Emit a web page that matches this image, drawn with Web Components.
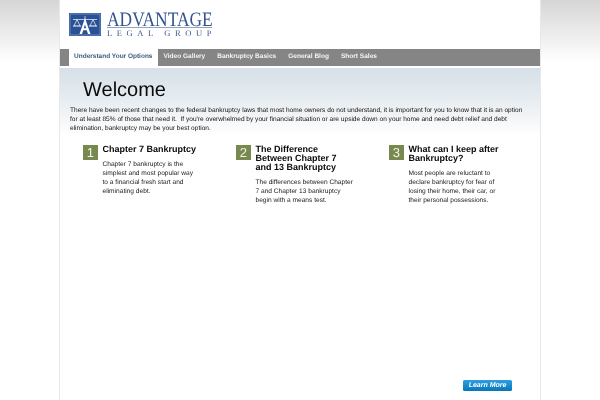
<!DOCTYPE html>
<html>
<head>
<meta charset="utf-8">
<title>Advantage Legal Group</title>
<style>
  html, body { margin: 0; height: 400px; overflow: hidden; }
  body {
    background: linear-gradient(#d6d6d6 0, #ffffff 62px);
    font-family: "Liberation Sans", Arial, sans-serif;
    text-rendering: geometricPrecision;
  }
</style>
</head>
<body>
<site-page>
  <site-logo></site-logo>
  <main-nav>
    <nav-link active>Understand Your Options</nav-link>
    <nav-link>Video Gallery</nav-link>
    <nav-link>Bankruptcy Basics</nav-link>
    <nav-link>General Blog</nav-link>
    <nav-link>Short Sales</nav-link>
  </main-nav>
  <welcome-panel heading="Welcome">
    There have been recent changes to the federal bankruptcy laws that most home owners do not understand, it is important for you to know that it is an option for at least 85% of those that need it.&nbsp; If you're overwhelmed by your financial situation or are upside down on your home and need debt relief and debt elimination, bankruptcy may be your best option.
  </welcome-panel>
  <step-row>
    <step-card num="1" heading="Chapter 7 Bankruptcy">Chapter 7 bankruptcy is the<br>simplest and most popular way<br>to a financial fresh start and<br>eliminating debt.</step-card>
    <step-card num="2" heading="The Difference Between Chapter 7 and 13 Bankruptcy">The differences between Chapter<br>7 and Chapter 13 bankruptcy<br>begin with a means test.</step-card>
    <step-card num="3" heading="What can I keep after Bankruptcy?">Most people are reluctant to<br>declare bankruptcy for fear of<br>losing their home, their car, or<br>their personal possessions.</step-card>
  </step-row>
  <learn-more>Learn More</learn-more>
</site-page>

<script>
// page shell: the white column in the middle
class SitePage extends HTMLElement {
  constructor() {
    super();
    this.attachShadow({ mode: 'open' });
    this.shadowRoot.innerHTML = `
      <style>
        :host {
          display: flex;
          flex-direction: column;
          box-sizing: border-box;
          width: 482px;
          height: 400px;
          margin-left: 59px;
          background: #fff;
          border-left: 1px solid #e8e8e8;
          border-right: 1px solid #e8e8e8;
          filter: blur(0.25px);
        }
      </style>
      <slot></slot>
    `;
  }
}

class SiteLogo extends HTMLElement {
  constructor() {
    super();
    this.attachShadow({ mode: 'open' });
    this.shadowRoot.innerHTML = `
      <style>
        :host {
          display: flex;
          gap: 6px;
          height: 49px;
          box-sizing: border-box;
          padding: 13px 0 0 9px;
        }
        svg { display: block; width: 32px; height: 23px; }
        .name {
          width: 105px;
          font-family: "Liberation Serif", "Times New Roman", serif;
          color: #34548f;
        }
        .top {
          height: 14px;
          border-bottom: 1px solid #8fa3c4;
        }
        .top span {
          display: block;
          font-size: 20.5px;
          line-height: 14px;
          white-space: nowrap;
          transform: scaleX(0.85);
          transform-origin: left center;
        }
        .bottom {
          font-size: 8.5px;
          line-height: 9px;
          margin-top: 1px;
          letter-spacing: 4.6px;
          white-space: nowrap;
          color: #3d5a92;
        }
      </style>
      <svg viewBox="0 0 32 23">
        <rect width="32" height="23" fill="#2a5095"/>
        <rect x="1" y="1" width="30" height="21" fill="none" stroke="#9fb3d3" stroke-width=".6"/>
        <path d="M4 6.5H28M16 3V6.5M8 6.5L5 13M8 6.5L11 13M24 6.5L21 13M24 6.5L27 13" stroke="#dfe7f3" stroke-width=".8" fill="none"/>
        <path d="M4 13H12M20 13H28" stroke="#fff" stroke-width="1.2"/>
        <path d="M10.5 21L16 5L21.5 21H19L17.8 17.2H14.2L13 21ZM14.8 15.2H17.2L16 11.5Z" fill="#fff"/>
      </svg>
      <div class="name">
        <div class="top"><span>ADVANTAGE</span></div>
        <div class="bottom">LEGAL GROUP</div>
      </div>
    `;
  }
}

class MainNav extends HTMLElement {
  constructor() {
    super();
    this.attachShadow({ mode: 'open' });
    this.shadowRoot.innerHTML = `
      <style>
        :host {
          display: flex;
          height: 17px;
          padding-left: 9px;
          background: #858585;
        }
      </style>
      <slot></slot>
    `;
  }
}

class NavLink extends HTMLElement {
  constructor() {
    super();
    this.attachShadow({ mode: 'open' });
    this.shadowRoot.innerHTML = `
      <style>
        :host {
          display: block;
          padding: 0 6px;
          font-size: 6.55px;
          font-weight: 700;
          line-height: 16px;
          color: #f4f4f4;
          white-space: nowrap;
        }
        :host([active]) {
          background: #fff;
          color: #3d5b7c;
          padding: 0 5px;
          font-size: 6.5px;
        }
      </style>
      <slot></slot>
    `;
  }
}

class WelcomePanel extends HTMLElement {
  constructor() {
    super();
    this.attachShadow({ mode: 'open' });
    this.shadowRoot.innerHTML = `
      <style>
        :host {
          display: block;
          margin-top: 2px;
          height: 65px;
          padding: 10px 11px 0 10px;
          background: linear-gradient(#d6e0e8 0, #e6ecf0 30px, #ffffff 68px);
        }
        h1 {
          margin: 0 0 0 13px;
          font-size: 20px;
          font-weight: 400;
          line-height: 25px;
          color: #0a0a0a;
        }
        p {
          margin: 0;
          padding-top: 2.5px;
          font-size: 6.57px;
          line-height: 9.2px;
          color: #111;
        }
      </style>
      <h1></h1>
      <p><slot></slot></p>
    `;
    this.shadowRoot.querySelector('h1').textContent = this.getAttribute('heading');
  }
}

class StepRow extends HTMLElement {
  constructor() {
    super();
    this.attachShadow({ mode: 'open' });
    this.shadowRoot.innerHTML = `
      <style>
        :host {
          display: grid;
          grid-template-columns: repeat(3, 153px);
          padding: 2px 0 0 22.5px;
          flex: 1;
        }
      </style>
      <slot></slot>
    `;
  }
}

class StepCard extends HTMLElement {
  constructor() {
    super();
    this.attachShadow({ mode: 'open' });
    this.shadowRoot.innerHTML = `
      <style>
        :host { display: flex; gap: 4.5px; align-items: flex-start; }
        .num {
          flex: none;
          width: 15.5px;
          height: 15px;
          background: #77894f;
          color: #f2f2e8;
          font-size: 13px;
          line-height: 15px;
          text-align: center;
        }
        .body { width: 96px; }
        h2 {
          margin: 0;
          font-size: 9px;
          font-weight: 700;
          line-height: 9px;
          color: #0a0a0a;
        }
        p {
          margin: 6px 0 0;
          font-size: 6.6px;
          line-height: 9.1px;
          color: #222;
          white-space: nowrap;
        }
      </style>
      <div class="num"></div>
      <div class="body">
        <h2></h2>
        <p><slot></slot></p>
      </div>
    `;
    this.shadowRoot.querySelector('.num').textContent = this.getAttribute('num');
    this.shadowRoot.querySelector('h2').textContent = this.getAttribute('heading');
  }
}

class LearnMore extends HTMLElement {
  constructor() {
    super();
    this.attachShadow({ mode: 'open' });
    this.shadowRoot.innerHTML = `
      <style>
        :host {
          display: block;
          align-self: flex-end;
          width: 49px;
          height: 11px;
          margin: 0 28px 9px 0;
          border-radius: 1.5px;
          background: linear-gradient(#2d9ee0, #0877b8);
          color: #fff;
          font-size: 7px;
          font-weight: 700;
          font-style: italic;
          line-height: 11px;
          text-align: center;
        }
      </style>
      <slot></slot>
    `;
  }
}

customElements.define('site-page', SitePage);
customElements.define('site-logo', SiteLogo);
customElements.define('main-nav', MainNav);
customElements.define('nav-link', NavLink);
customElements.define('welcome-panel', WelcomePanel);
customElements.define('step-row', StepRow);
customElements.define('step-card', StepCard);
customElements.define('learn-more', LearnMore);
</script>
</body>
</html>
